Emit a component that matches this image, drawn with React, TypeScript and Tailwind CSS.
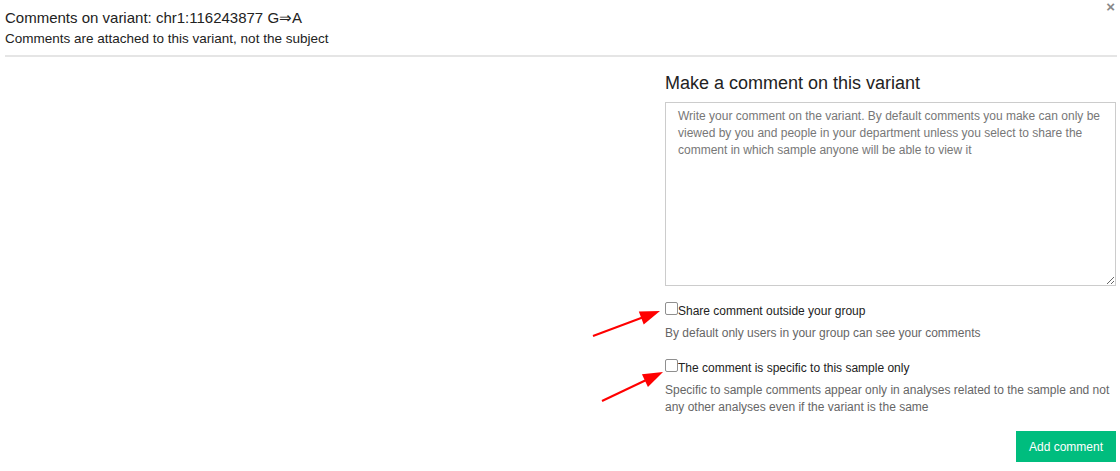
import React from "react";

function Arrow({ x1, y1, x2, y2 }: { x1: number; y1: number; x2: number; y2: number }) {
  const dx = x2 - x1;
  const dy = y2 - y1;
  const len = Math.sqrt(dx * dx + dy * dy);
  const ux = dx / len;
  const uy = dy / len;
  const headLen = 20;
  const headW = 7;
  const bx = x2 - ux * headLen;
  const by = y2 - uy * headLen;
  const p1 = `${bx - uy * headW},${by + ux * headW}`;
  const p2 = `${bx + uy * headW},${by - ux * headW}`;
  return (
    <g>
      <line x1={x1} y1={y1} x2={bx + ux * 2} y2={by + uy * 2} stroke="#f00" strokeWidth={2} />
      <polygon points={`${x2},${y2} ${p1} ${p2}`} fill="#f00" />
    </g>
  );
}

export default function App() {
  return (
    <div className="relative w-[1120px] h-[471px] bg-white text-[#222] overflow-hidden" style={{ fontFamily: '"Liberation Sans", Arial, sans-serif' }}>
      <button className="absolute right-[5px] top-0 text-[15px] leading-[14px] font-bold text-[#888]">×</button>

      <div className="pl-[5px] pr-[3px]">
        <h1 className="mt-[8px] text-[15px] leading-[20px] font-normal text-[#222]">
          Comments on variant: chr1:116243877 G⇒A
        </h1>
        <p className="mt-px text-[13.5px] leading-[20px] text-[#222]">Comments are attached to this variant, not the subject</p>
        <div className="mt-[6px] h-[2px] bg-[#e5e5e5]" />
      </div>

      <div className="flex">
        <div className="w-[665px] shrink-0" />
        <div className="w-[451px] flex flex-col">
          <h2 className="mt-[14px] text-[18px] leading-[24px] text-[#222]">Make a comment on this variant</h2>
          <textarea
            className="mt-[7px] h-[184px] w-full border border-[#ccc] px-3 pt-[5px] text-[12px] leading-[17px] text-[#555] placeholder:text-[#777] outline-none"
            placeholder="Write your comment on the variant. By default comments you make can only be viewed by you and people in your department unless you select to share the comment in which sample anyone will be able to view it"
          />

          <label className="mt-[18px] flex items-start text-[12px] leading-[16px] text-[#222]">
            <input type="checkbox" className="-mt-[2px] m-0 h-[13px] w-[13px] appearance-none rounded-[2px] border border-[#8f8f8f] bg-white" />
            <span className="-mt-px">Share comment outside your group</span>
          </label>
          <p className="mt-[6px] text-[12px] leading-[17px] text-[#666]">By default only users in your group can see your comments</p>

          <label className="mt-[19px] flex items-start text-[12px] leading-[16px] text-[#222]">
            <input type="checkbox" className="-mt-[2px] m-0 h-[13px] w-[13px] appearance-none rounded-[2px] border border-[#8f8f8f] bg-white" />
            <span className="-mt-px">The comment is specific to this sample only</span>
          </label>
          <p className="mt-[6px] text-[12px] leading-[17px] text-[#666]">
            Specific to sample comments appear only in analyses related to the sample and not any other analyses even if the variant is the same
          </p>

          <div className="mt-[15px] flex justify-end">
            <button className="h-[31px] w-[100px] bg-[#00bd7e] text-[12px] text-white">Add comment</button>
          </div>
        </div>
      </div>

      <svg className="absolute left-0 top-0 pointer-events-none" width={1120} height={471}>
        <Arrow x1={593} y1={336} x2={660} y2={311} />
        <Arrow x1={602} y1={401} x2={663} y2={372} />
      </svg>
    </div>
  );
}
